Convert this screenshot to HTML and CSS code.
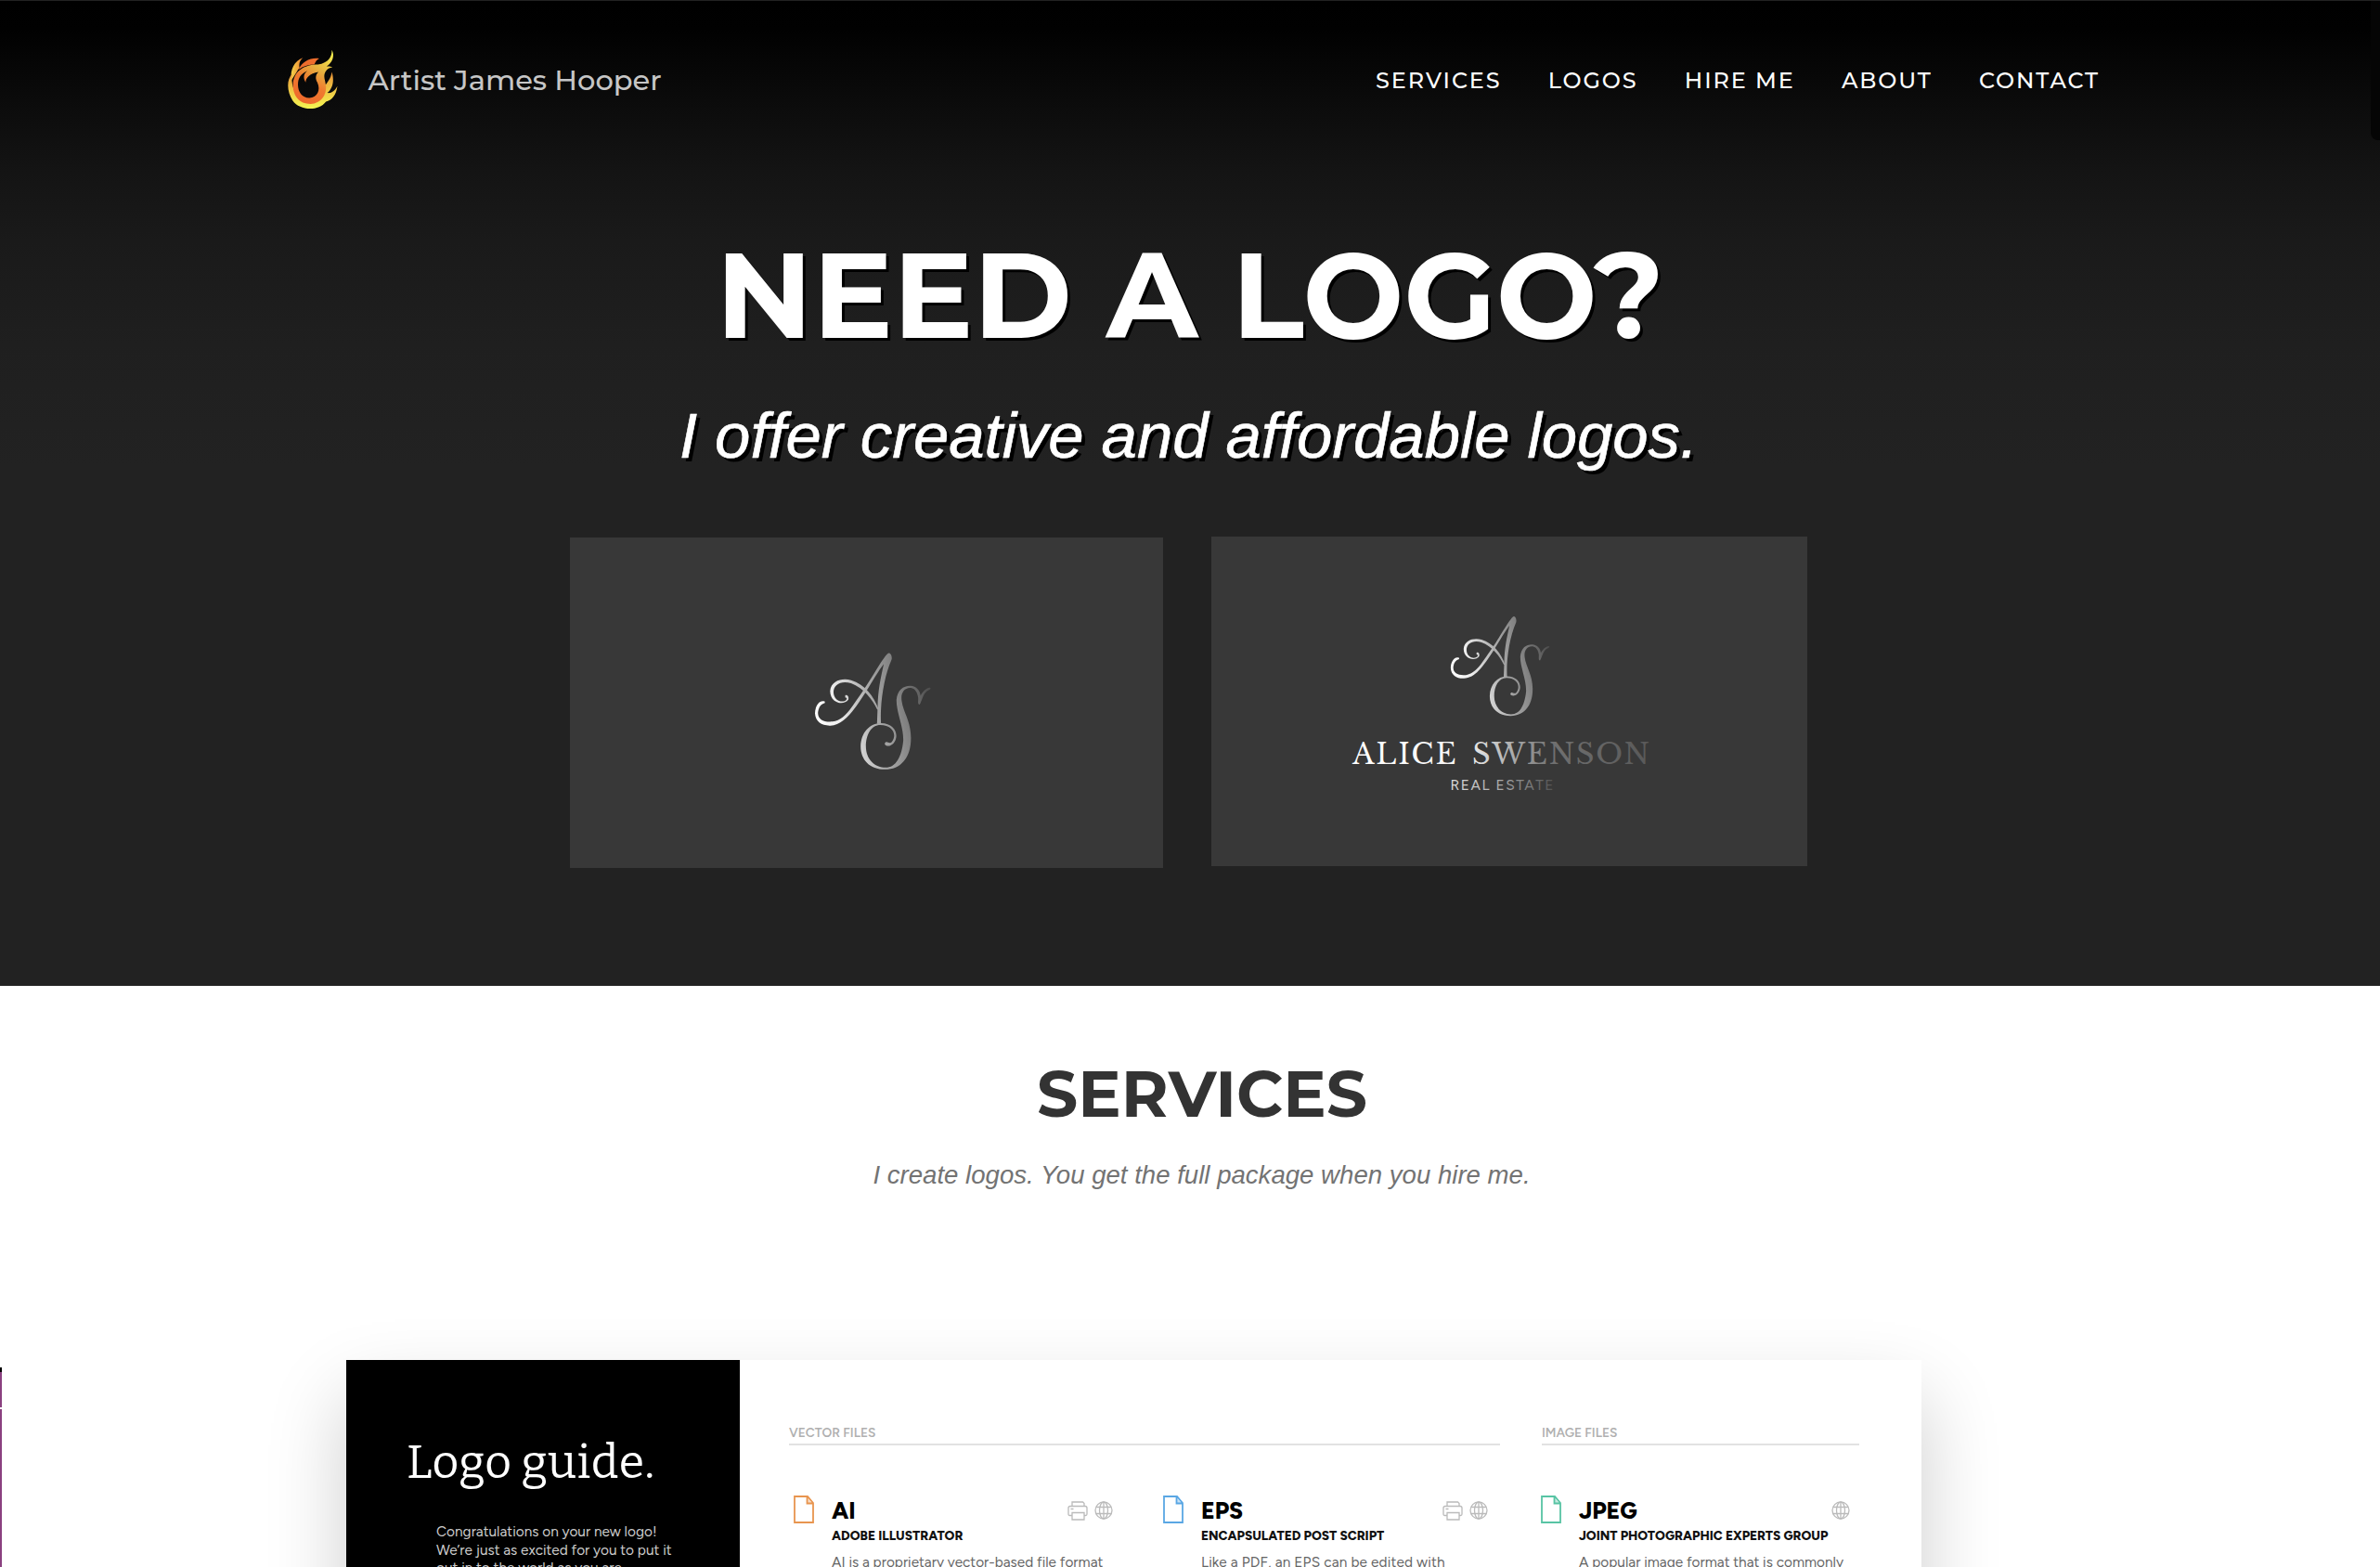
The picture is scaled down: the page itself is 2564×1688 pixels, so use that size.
FILE: index.html
```html
<!DOCTYPE html>
<html lang="en">
<head>
<meta charset="utf-8">
<title>Artist James Hooper</title>
<link rel="stylesheet" href="styles.css">
</head>
<body>
<svg class="defs" aria-hidden="true">
  <defs>
    <linearGradient id="silver" gradientUnits="userSpaceOnUse" x1="83" y1="290" x2="460" y2="200">
      <stop offset="0" stop-color="#fff"/><stop offset=".2" stop-color="#eee"/><stop offset=".5" stop-color="#a9a9a9"/><stop offset=".8" stop-color="#777"/><stop offset="1" stop-color="#4c4c4c"/>
    </linearGradient>
    <linearGradient id="name" gradientUnits="userSpaceOnUse" x1="152" y1="0" x2="470" y2="0">
      <stop offset="0" stop-color="#fff"/><stop offset=".38" stop-color="#f4f4f4"/><stop offset=".68" stop-color="#707070"/><stop offset="1" stop-color="#595959"/>
    </linearGradient>
    <linearGradient id="trade" gradientUnits="userSpaceOnUse" x1="258" y1="0" x2="367" y2="0">
      <stop offset="0" stop-color="#ddd"/><stop offset=".5" stop-color="#aaa"/><stop offset="1" stop-color="#555"/>
    </linearGradient>
    <linearGradient id="flame" gradientUnits="userSpaceOnUse" x1="60" y1="0" x2="220" y2="0">
      <stop offset="0" stop-color="#f2e94e"/><stop offset=".35" stop-color="#f0702c"/><stop offset=".65" stop-color="#ec8a33"/><stop offset="1" stop-color="#e9d848"/>
    </linearGradient>
    <linearGradient id="ring" gradientUnits="userSpaceOnUse" x1="90" y1="215" x2="205" y2="45">
      <stop offset="0" stop-color="#ee652b"/><stop offset=".4" stop-color="#ef7a2f"/><stop offset=".65" stop-color="#e6b23f"/><stop offset="1" stop-color="#f6f651"/>
    </linearGradient>
    <linearGradient id="lick" gradientUnits="userSpaceOnUse" x1="0" y1="60" x2="0" y2="230">
      <stop offset="0" stop-color="#ee5f2a"/><stop offset=".5" stop-color="#ecb13e"/><stop offset="1" stop-color="#f5f552"/>
    </linearGradient>
    <symbol id="monogram" viewBox="80 66 382 384">
      <g fill="url(#silver)">
        <path d="M115 227C95 220 83 245 83 265C84 292 105 306 133 305C175 303 205 262 245 200C270 160 290 125 306 105C296 150 287 190 286 245L284 299L297 299C293 240 305 150 331 92C335 78 325 64 318 72C300 90 268 150 237 195C205 240 180 288 140 292C110 295 90 283 93 260C95 245 103 235 115 232Z"/>
        <path d="M181 207C188 203 194 212 191 221C178 240 133 235 132 193C135 157 175 150 200 158C245 172 275 210 290 255L284 252C270 222 240 182 200 168C168 158 143 172 143 197C144 225 172 233 184 222C188 216 185 216 181 214Z"/>
        <path d="M312 359C318 355 324 366 332 358C350 335 335 303 295 303C265 303 248 335 248 372C248 415 278 441 312 441C346 441 364 405 369 355C371 310 347 265 347 222C350 190 368 176 392 176C412 177 424 192 425 208C432 195 445 181 456 182C462 187 450 190 445 194C432 204 430 225 422 237C414 236 419 222 417 212C413 190 402 183 390 183C372 184 360 200 364 225C368 260 394 290 394 345C394 410 360 447 310 447C260 447 231 415 231 372C232 328 260 297 297 297C335 297 352 325 345 348C340 365 325 375 313 369C308 366 308 362 312 359Z"/>
      </g>
    </symbol>
    <symbol id="file" viewBox="0 0 22 30">
      <path d="M1 1h14l6 7v21H1zM14.5 1v7.500H21" fill="none" stroke="currentColor" stroke-width="1.800"/>
      <path d="M14.500 2l5.500 6.500h-5.500z" fill="currentColor" opacity=".35"/>
    </symbol>
    <symbol id="printer" viewBox="0 0 22 21">
      <g fill="none" stroke="currentColor" stroke-width="1.300">
        <path d="M5 5V1h11.500L18 2.500V5M5 15.500H2.500Q1 15.500 1 14V7.500Q1 5.500 3 5.500h16q2 0 2 2V14q0 1.500-1.500 1.500H18"/>
        <path d="M5 12.500h13V20H5zM3.500 8.500h3"/>
      </g>
    </symbol>
    <symbol id="globe" viewBox="0 0 20 20">
      <g fill="none" stroke="currentColor" stroke-width="1.300">
        <circle cx="10" cy="10" r="9"/><ellipse cx="10" cy="10" rx="4.500" ry="9"/>
        <path d="M10 1v18M2 6.500h16M2 13.500h16"/>
      </g>
    </symbol>
  </defs>
</svg>

<section class="hero">
  <header class="topbar">
    <a class="brand">
      <svg class="brand-mark" viewBox="60 38 164 196">
        <path fill="url(#flame)" d="M109 66C82 76 66 104 72 138C86 118 90 108 98 98C96 86 98 76 109 66Z"/>
        <path fill="#ee6d2d" d="M162 68C134 64 106 78 95 104C112 92 130 88 146 88C150 78 154 72 162 68Z"/>
        <path fill="url(#lick)" fill-rule="evenodd" d="M74 118C54 140 58 178 76 205C98 236 158 242 184 208C202 206 218 186 221 158C212 174 202 182 188 180C206 166 212 140 203 112C200 134 188 146 180 158L160 206C120 224 66 190 74 118Z"/>
        <path fill="url(#ring)" fill-rule="evenodd" d="M203 40C204 62 192 82 158 88C118 88 84 104 77 146C74 190 98 216 134 216C168 214 186 188 184 158C182 138 174 126 182 112C188 102 196 98 205 97C196 92 192 94 186 94C204 82 214 60 203 40ZM118 146C119 130 130 118 160 112C148 122 150 136 156 146C168 172 155 196 130 196C106 196 93 176 93 153C93 132 102 118 124 108C110 118 110 132 118 146Z"/>
      </svg>
      <span class="brand-name">Artist James Hooper</span>
    </a>
    <nav class="menu">
      <a>SERVICES</a><a>LOGOS</a><a>HIRE ME</a><a>ABOUT</a><a>CONTACT</a>
    </nav>
  </header>
  <h1 class="hero-title">NEED A LOGO?</h1>
  <p class="hero-tagline">I offer creative and affordable logos.</p>
  <div class="samples">
    <div class="sample sample-mark"><svg class="mark-large"><use href="#monogram"/></svg></div>
    <div class="sample sample-full">
      <svg class="lockup" viewBox="0 0 642 355">
        <use href="#monogram" x="257" y="85" width="108.500" height="109"/>
        <text class="lockup-name" x="152" y="245" textLength="320" fill="url(#name)">ALICE SWENSON</text>
        <text class="lockup-trade" x="257.500" y="273" textLength="111" fill="url(#trade)">REAL ESTATE</text>
      </svg>
    </div>
  </div>
  <div class="side-handle"></div>
</section>

<section class="services">
  <h2 class="services-title">SERVICES</h2>
  <p class="services-text">I create logos. You get the full package when you hire me.</p>
  <div class="guide">
    <aside class="guide-intro">
      <h3>Logo guide.</h3>
      <p>Congratulations on your new logo!<br>We’re just as excited for you to put it<br>out in to the world as you are.</p>
    </aside>
    <div class="group vector">
      <h4>VECTOR FILES</h4>
      <div class="formats">
        <article class="format orange">
          <svg class="file"><use href="#file"/></svg>
          <div class="format-body">
            <div class="format-head"><h5>AI</h5><span class="uses"><svg class="printer"><use href="#printer"/></svg><svg class="globe"><use href="#globe"/></svg></span></div>
            <h6>ADOBE ILLUSTRATOR</h6>
            <p>AI is a proprietary vector-based file format</p>
          </div>
        </article>
        <article class="format blue">
          <svg class="file"><use href="#file"/></svg>
          <div class="format-body">
            <div class="format-head"><h5>EPS</h5><span class="uses"><svg class="printer"><use href="#printer"/></svg><svg class="globe"><use href="#globe"/></svg></span></div>
            <h6>ENCAPSULATED POST SCRIPT</h6>
            <p class="wide">Like a PDF, an EPS can be edited with</p>
          </div>
        </article>
      </div>
    </div>
    <div class="group image">
      <h4>IMAGE FILES</h4>
      <div class="formats">
        <article class="format green">
          <svg class="file"><use href="#file"/></svg>
          <div class="format-body">
            <div class="format-head"><h5>JPEG</h5><span class="uses"><svg class="globe"><use href="#globe"/></svg></span></div>
            <h6>JOINT PHOTOGRAPHIC EXPERTS GROUP</h6>
            <p>A popular image format that is commonly</p>
          </div>
        </article>
      </div>
    </div>
  </div>
  <div class="prev-slide"></div>
</section>
</body>
</html>
```
FILE: styles.css
```css
* { box-sizing: border-box; margin: 0; padding: 0; }

body {
  height: 1688px;
  overflow: hidden;
  background: #fff;
  font-family: "Liberation Sans", Arial, sans-serif;
}

.defs { position: absolute; width: 0; height: 0; }
svg { display: block; }

/* Hero */
.hero {
  position: relative;
  height: 1062px;
  background: linear-gradient(#000 0, #010101 30px, #0c0c0c 115px, #141414 185px, #1a1a1a 260px, #1f1f1f 370px, #222 500px);
  border-top: 1px solid #222;
  color: #fff;
}

.topbar {
  display: flex;
  justify-content: space-between;
  align-items: center;
  height: 171px;
  padding: 0 302px 0 310px;
}

.brand { display: flex; align-items: center; gap: 32px; margin-top: -2px; }
.brand-mark { width: 54.500px; height: 65px; }
.brand-name { font: 500 30.500px/40px Montserrat, Inter, sans-serif; color: #c6c6c6; }

.menu {
  display: flex;
  gap: 50.300px;
  font: 500 23.900px/30px Montserrat, Inter, sans-serif;
  letter-spacing: 1.900px;
}

.hero-title {
  margin-top: 71px;
  font: 700 129px/150px Montserrat, Inter, sans-serif;
  text-align: center;
  text-shadow: 3px 3px 0 #000;
}

.hero-tagline {
  margin: 35px 3px 0 0;
  font-size: 69px;
  line-height: 84px;
  font-style: italic;
  letter-spacing: -.1px;
  text-align: center;
  text-shadow: 4px 4px 0 #000;
  -webkit-text-stroke: .6px #fff;
}

.samples { display: flex; align-items: flex-start; margin-top: 66px; padding-left: 614px; gap: 52px; }
.sample { display: flex; background: #383838; }
.sample-mark { width: 639px; height: 356px; margin-top: 1px; justify-content: center; align-items: center; padding: 18px 0 0 14px; }
.mark-large { width: 127px; height: 128px; }
.sample-full { width: 642px; height: 355px; }
.lockup { width: 642px; height: 355px; }
.lockup-name { font: 400 30.500px "Libre Baskerville", "Liberation Serif", serif; word-spacing: 5px; }
.lockup-trade { font: 400 15.500px Figtree, Lato, sans-serif; }

.side-handle {
  position: absolute;
  top: 0;
  right: 0;
  width: 10px;
  height: 150px;
  background: #050505;
  border-bottom-left-radius: 8px;
}

/* Services */
.services { position: relative; height: 626px; padding-top: 76px; overflow: hidden; }

.services-title {
  padding-left: 26px;
  font: 700 69.300px/80px Montserrat, Inter, sans-serif;
  color: #333;
  text-align: center;
}

.services-text {
  margin-top: 31px;
  padding-left: 25px;
  font-size: 27.600px;
  line-height: 34px;
  font-style: italic;
  color: #737373;
  text-align: center;
}

.guide {
  display: grid;
  grid-template-columns: 424px 1fr 409px;
  width: 1697px;
  height: 1000px;
  margin: 182px 0 0 373px;
  background: #fff;
  box-shadow: 0 40px 80px rgba(0, 0, 0, .2);
  font-family: Figtree, Lato, sans-serif;
}

.guide-intro { padding-top: 80px; background: #000; }
.guide-intro h3 { padding-left: 65px; font: 400 50px/60px Bitter, "DejaVu Serif", serif; letter-spacing: .4px; color: #fff; }
.guide-intro p { margin-top: 35px; padding-left: 97px; font-size: 15.400px; line-height: 19.500px; color: #ccc; }

.group { padding-top: 69px; }
.vector { padding-left: 53px; }
.vector h4 { width: 766px; }
.image { width: 342px; }
.group h4 {
  padding-bottom: 3px;
  border-bottom: 2px solid #e2e2e2;
  font-size: 13.700px;
  line-height: 18px;
  font-weight: 600;
  color: #b0b0b0;
}

.formats { display: flex; padding-top: 54px; }
.format { display: flex; }
.file { width: 22px; height: 30px; flex: none; }
.orange { width: 397px; padding-left: 5px; }
.orange .file { color: #e8954f; }
.blue { width: 356px; padding-left: 6px; }
.blue .file { color: #5aa7e4; }
.green { width: 333px; margin-left: -1px; }
.green .file { color: #58c4a4; }
.format-body { flex: 1; padding: 1px 0 0 19px; white-space: nowrap; }
.format-head { display: flex; justify-content: space-between; }
.orange .format-head { padding-right: 48px; }
.format h5 { font-size: 25px; line-height: 30px; font-weight: 800; color: #000; }
.format h6 { margin-top: 3px; font-size: 13.700px; line-height: 18px; font-weight: 800; color: #111; }
.format p { margin-top: 10px; font-size: 15.400px; line-height: 19.500px; color: #666; }
.format .wide { letter-spacing: .15px; }
.uses { display: flex; gap: 7px; padding-top: 5px; color: #bbb; }
.printer { width: 22px; height: 21px; }
.globe { width: 20px; height: 20px; }

/* Edge of the previous carousel slide */
.prev-slide {
  position: absolute;
  top: 411px;
  left: 0;
  width: 2px;
  height: 215px;
  background: linear-gradient(#000 0 5px, #8a4080 5px 43px, #fff 43px 45px, #8a4080 45px);
}
```
